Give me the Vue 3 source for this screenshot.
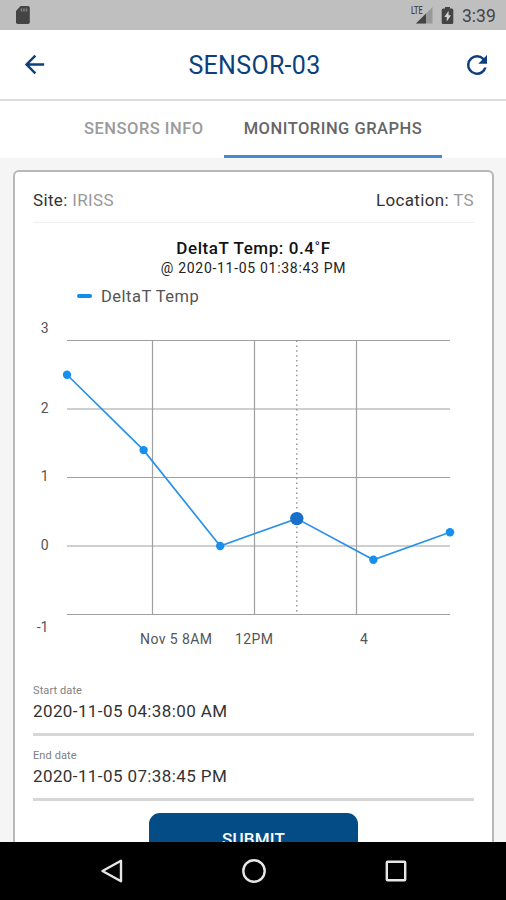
<template>
  <div class="screen">
    <!-- Status bar -->
    <div class="status-bar">
      <svg class="sd-icon" width="16" height="20" viewBox="0 0 16 20">
        <path d="M5.5 1H13a1.8 1.8 0 0 1 1.8 1.8v14.4A1.8 1.8 0 0 1 13 19H2.8A1.8 1.8 0 0 1 1 17.200V6z" fill="#444" />
        <path d="M6.500 3.500v3M9 3.500v3M11.500 3.500v3" stroke="#858585" stroke-width="1.500" />
      </svg>
      <div class="status-right">
        <svg class="signal" width="24" height="20" viewBox="0 0 24 20">
          <path d="M22.500 2v16.500H6z" fill="#999" />
          <path d="M16 8.500v10H6z" fill="#444" />
          <path d="M0 0h13v10H0z" fill="#bfbfbf" />
          <text x="1" y="9" font-size="10.500" font-weight="500" textLength="11.500" lengthAdjust="spacingAndGlyphs" fill="#444">LTE</text>
        </svg>
        <svg class="battery" width="13" height="19" viewBox="0 0 13 19">
          <path d="M4 1h5v1.500h2A1.500 1.500 0 0 1 12.300 4v12.500A1.500 1.500 0 0 1 10.800 18H2.200A1.500 1.500 0 0 1 .7 16.500V4a1.500 1.500 0 0 1 1.500-1.500H4z" fill="#444" />
          <path d="M7.600 4.800 3.300 11h2.500v4.500L10 9.300H7.600z" fill="#d2d2d2" />
        </svg>
        <span class="clock">3:39</span>
      </div>
    </div>

    <!-- Header -->
    <header class="header">
      <button class="icon-btn" aria-label="Back">
        <svg width="29" height="29" viewBox="0 0 24 24">
          <path d="M20 11H7.830l5.590-5.590L12 4l-8 8 8 8 1.410-1.410L7.830 13H20z" fill="#0d3f7d" />
        </svg>
      </button>
      <h1 class="title">SENSOR-03</h1>
      <button class="icon-btn" aria-label="Refresh">
        <svg width="30" height="30" viewBox="0 0 24 24">
          <path d="M17.650 6.350A7.958 7.958 0 0 0 12 4a8 8 0 1 0 7.730 10h-2.080A6 6 0 1 1 12 6c1.660 0 3.140.69 4.220 1.780L13 11h7V4z" fill="#0d3f7d" />
        </svg>
      </button>
    </header>

    <!-- Tabs -->
    <nav class="tabs">
      <button
        v-for="tab in tabs"
        :key="tab.id"
        class="tab"
        :class="{ active: activeTab === tab.id }"
        @click="activeTab = tab.id"
      >
        {{ tab.label }}
      </button>
    </nav>

    <!-- Content -->
    <main class="content">
      <section class="card">
        <div class="info">
          <span>Site: <em>IRISS</em></span>
          <span>Location: <em>TS</em></span>
        </div>

        <div class="reading">
          <strong>DeltaT Temp: 0.4˚F</strong>
          <span>@ 2020-11-05 01:38:43 PM</span>
        </div>

        <div class="legend">
          <i></i>
          <span>DeltaT Temp</span>
        </div>

        <svg class="chart" width="442" height="359" viewBox="0 0 442 359">
          <line v-for="t in yTicks" :key="t.value" :x1="left" :x2="right" :y1="yPos(t.value)" :y2="yPos(t.value)" class="grid" />
          <line v-for="t in xTicks" :key="t.label" :x1="t.x" :x2="t.x" :y1="yPos(3)" :y2="yPos(-1)" class="grid" />
          <line :x1="points[selected].x" :x2="points[selected].x" :y1="yPos(3)" :y2="yPos(-1)" class="cursor" />
          <polyline :points="linePoints" class="series" />
          <circle
            v-for="(p, i) in points"
            :key="i"
            :cx="p.x"
            :cy="p.y"
            :r="i === selected ? 6.700 : 4.200"
            :class="i === selected ? 'dot-selected' : 'dot'"
            @click="selected = i"
          />
          <text v-for="t in yTicks" :key="'y' + t.value" x="15.500" :y="t.labelY" text-anchor="end" class="label">{{ t.value }}</text>
          <text
            v-for="t in xTicks"
            :key="'x' + t.label"
            :x="t.labelX"
            y="332"
            :textLength="t.width"
            class="label"
          >{{ t.label }}</text>
        </svg>

        <div v-for="field in fields" :key="field.label" class="field">
          <label>{{ field.label }}</label>
          <div class="value">{{ field.value }}</div>
        </div>

        <button class="submit">SUBMIT</button>
      </section>
    </main>

    <!-- System navigation -->
    <div class="nav-bar">
      <svg width="26" height="26" viewBox="0 0 26 26"><path d="M22 2.800v20.400L3.500 13z" /></svg>
      <svg width="26" height="26" viewBox="0 0 26 26"><circle cx="13" cy="13" r="10.700" /></svg>
      <svg width="26" height="26" viewBox="0 0 26 26"><rect x="3.800" y="3.800" width="18.400" height="18.400" rx="0.800" /></svg>
    </div>
  </div>
</template>

<script setup>
import { ref, computed } from 'vue'

const tabs = [
  { id: 'info',   label: 'SENSORS INFO'      },
  { id: 'graphs', label: 'MONITORING GRAPHS' },
]
const activeTab = ref('graphs')

const fields = [
  { label: 'Start date', value: '2020-11-05 04:38:00 AM' },
  { label: 'End date',   value: '2020-11-05 07:38:45 PM' },
]

// Chart
const left  = 34
const right = 417
const readings = [2.5, 1.4, 0, 0.4, -0.2, 0.2]
const selected = ref(3)

const yTicks = [
  { value: 3,  labelY: 20.5  },
  { value: 2,  labelY: 100.5 },
  { value: 1,  labelY: 169   },
  { value: 0,  labelY: 238   },
  { value: -1, labelY: 319.5 },
]
const xTicks = [
  { label: 'Nov 5 8AM', x: 119.5, labelX: 107, width: 72 },
  { label: '12PM',      x: 221.5, labelX: 202, width: 38 },
  { label: '4',         x: 323.5, labelX: 327, width: 8  },
]

function yPos(value) {
  return 28.5 + (3 - value) * 68.5
}

const points = readings.map((value, i) => ({
  x: left + ((right - left) / (readings.length - 1)) * i,
  y: yPos(value),
}))
const linePoints = computed(() => points.map(p => `${p.x},${p.y}`).join(' '))
</script>

<style>
body {
  margin: 0;
  background: #f5f5f5;
}
</style>

<style scoped>
.screen {
  display: flex;
  flex-direction: column;
  width: 506px;
  height: 900px;
  overflow: hidden;
  background: #f5f5f5;
  font-family: Roboto, "Liberation Sans", sans-serif;
  color: #333;
}
button {
  padding: 0;
  border: none;
  background: none;
  font-family: inherit;
  cursor: pointer;
}

/* Status bar */
.status-bar {
  display: flex;
  justify-content: space-between;
  align-items: center;
  flex: none;
  height: 30px;
  padding: 0 9px 0 15px;
  background: #bfbfbf;
}
.status-right {
  display: flex;
  align-items: center;
}
.battery { margin: 0 8px 0 7px; }
.clock {
  width: 35px;
  font-size: 17.5px;
  line-height: 30px;
  padding-top: 2px;
  color: #444;
}

/* Header */
.header {
  display: flex;
  justify-content: space-between;
  align-items: center;
  flex: none;
  box-sizing: border-box;
  height: 71px;
  padding: 0 14px 0 20px;
  background: #fff;
  border-bottom: 2px solid #dcdcdc;
}
.icon-btn { display: flex; }
.title {
  margin: 0;
  padding: 2px 2px 0 0;
  font-size: 25px;
  font-weight: 400;
  letter-spacing: 0.3px;
  color: #0d3f7d;
}

/* Tabs */
.tabs {
  display: flex;
  flex: none;
  height: 57px;
  padding-left: 64px;
  background: #fff;
}
.tab {
  box-sizing: border-box;
  padding: 0 20px;
  border-bottom: 3px solid transparent;
  font-size: 16.5px;
  font-weight: 500;
  letter-spacing: 0.5px;
  white-space: nowrap;
  color: #9b9b9b;
}
.tab.active {
  color: #666;
  border-bottom-color: #4689cc;
}

/* Card */
.content {
  flex: 1;
  min-height: 0;
  overflow: hidden;
  padding: 12px 12px 0 13px;
}
.card {
  display: flex;
  flex-direction: column;
  box-sizing: border-box;
  height: 720px;
  padding: 0 18px;
  background: #fff;
  border: 2px solid #b8b8b8;
  border-radius: 6px;
}
.info {
  display: flex;
  justify-content: space-between;
  flex: none;
  box-sizing: border-box;
  height: 51px;
  border-bottom: 1px solid #efefef;
  font-size: 17px;
  letter-spacing: 0.35px;
  line-height: 56px;
}
.info em {
  font-style: normal;
  color: #999;
}
.reading {
  display: flex;
  flex-direction: column;
  align-items: center;
  flex: none;
  padding-top: 15px;
}
.reading strong {
  font-size: 17px;
  font-weight: 500;
  letter-spacing: 0.58px;
  line-height: 20px;
  color: #111;
}
.reading span {
  font-size: 14px;
  letter-spacing: 0.7px;
  line-height: 20px;
  color: #222;
}
.legend {
  display: flex;
  align-items: center;
  flex: none;
  gap: 9px;
  height: 34px;
  padding: 2px 0 0 44px;
  box-sizing: border-box;
  font-size: 16.5px;
  letter-spacing: 0.5px;
  color: #555;
}
.legend i {
  width: 15px;
  height: 4px;
  border-radius: 2px;
  background: #108ee9;
}

/* Chart */
.chart {
  flex: none;
}
.grid {
  stroke: #a0a0a0;
  stroke-width: 1.2;
}
.cursor {
  stroke: #888;
  stroke-width: 1.3;
  stroke-dasharray: 1.5 3.4;
}
.series {
  fill: none;
  stroke: #2a91ea;
  stroke-width: 1.7;
}
.dot { fill: #178fee; }
.dot-selected { fill: #1670cc; }
.label {
  font-size: 14px;
  fill: #555;
}

/* Fields */
.field {
  flex: none;
  box-sizing: border-box;
  height: 65px;
  border-bottom: 3px solid #d6d6d6;
}
.field label {
  display: block;
  padding-top: 12px;
  font-size: 11px;
  letter-spacing: 0.1px;
  line-height: 16px;
  color: #808080;
}
.value {
  font-size: 17px;
  letter-spacing: 0.4px;
  line-height: 24px;
  color: #333;
}
.submit {
  flex: none;
  align-self: center;
  width: 209px;
  height: 52px;
  margin-top: 12px;
  border-radius: 11px;
  background: #034c86;
  font-size: 17px;
  font-weight: 500;
  letter-spacing: 0.2px;
  color: #fff;
}

/* System navigation */
.nav-bar {
  display: flex;
  justify-content: center;
  align-items: center;
  gap: 116px;
  flex: none;
  height: 58px;
  padding-left: 2px;
  box-sizing: border-box;
  background: #000;
}
.nav-bar svg {
  fill: none;
  stroke: #e6e6e6;
  stroke-width: 2.4;
  stroke-linejoin: round;
}
</style>
